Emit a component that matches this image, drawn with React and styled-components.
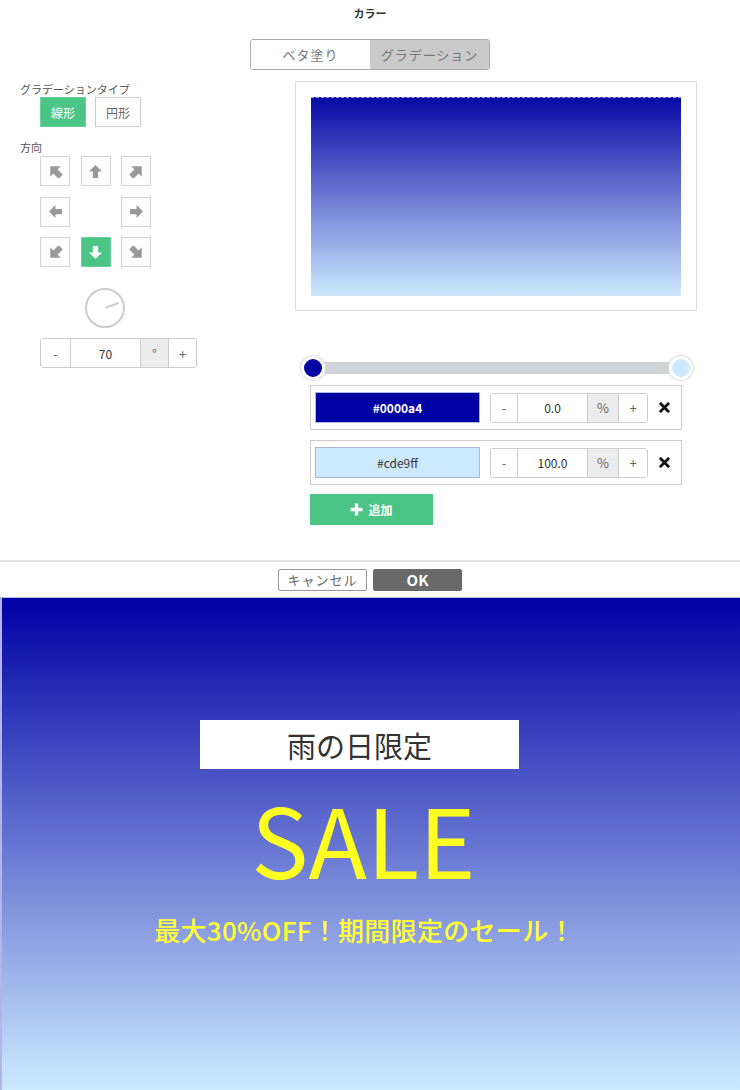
import React from 'react';
import styled, { createGlobalStyle } from 'styled-components';

const GlobalStyle = createGlobalStyle`
  html, body {
    margin: 0;
    padding: 0;
    background: #fff;
  }
  body {
    font-family: "Noto Sans CJK JP", "Noto Sans", sans-serif;
    color: #333;
  }
`;

const GREEN = '#4bc586';

const Page = styled.div`
  width: 740px;
  height: 1090px;
  overflow: hidden;
  display: flex;
  flex-direction: column;
`;

const Title = styled.div`
  height: 26px;
  line-height: 26px;
  text-align: center;
  font-size: 11px;
  font-weight: bold;
  color: #333;
`;

const Tabs = styled.div`
  align-self: center;
  margin-top: 13px;
  display: flex;
  width: 240px;
  height: 31px;
  border: 1px solid #aaa;
  border-radius: 3px;
  overflow: hidden;
  box-sizing: border-box;
`;

const Tab = styled.div`
  flex: 1;
  display: flex;
  align-items: center;
  justify-content: center;
  font-size: 13px;
  letter-spacing: 1px;
  color: #777;
  background: ${p => (p.$active ? '#c9c9c9' : '#fff')};
`;

const Body = styled.div`
  margin-top: 11px;
  height: 444px;
  display: flex;
`;

const LeftCol = styled.div`
  width: 295px;
  padding-left: 20px;
  box-sizing: border-box;
  display: flex;
  flex-direction: column;
  align-items: flex-start;
`;

const Label = styled.div`
  font-size: 11px;
  line-height: 16px;
  color: #555;
  margin-top: ${p => p.$top || 0}px;
`;

const TypeRow = styled.div`
  display: flex;
  gap: 9px;
  margin-left: 20px;
`;

const TypeButton = styled.div`
  width: 46px;
  height: 30px;
  box-sizing: border-box;
  display: flex;
  align-items: center;
  justify-content: center;
  font-size: 12px;
  color: ${p => (p.$active ? '#fff' : '#666')};
  background: ${p => (p.$active ? GREEN : '#fff')};
  border: 1px solid ${p => (p.$active ? '#69d09b' : '#ccc')};
`;

const DirGrid = styled.div`
  margin: 1px 0 0 20px;
  display: grid;
  grid-template-columns: repeat(3, 30px);
  grid-auto-rows: 30px;
  column-gap: 10.5px;
  row-gap: 10.5px;
`;

const DirButton = styled.div`
  box-sizing: border-box;
  display: flex;
  align-items: center;
  justify-content: center;
  background: ${p => (p.$active ? GREEN : '#fff')};
  border: 1px solid ${p => (p.$active ? '#69d09b' : '#d4d4d4')};
  color: ${p => (p.$active ? '#fff' : '#999')};
`;

const Empty = styled.div``;

const DialWrap = styled.div`
  margin: 21px 0 0 65px;
  width: 40px;
  height: 40px;
`;

const Stepper = styled.div`
  margin: ${p => p.$margin || '0'};
  display: flex;
  height: 30px;
  border: 1px solid #ccc;
  border-radius: 3px;
  box-sizing: border-box;
  overflow: hidden;
  background: #fff;
`;

const StepCell = styled.div`
  width: ${p => p.$w}px;
  box-sizing: border-box;
  display: flex;
  align-items: center;
  justify-content: center;
  font-size: ${p => (p.$value ? 12 : 13)}px;
  color: ${p => (p.$value ? '#333' : '#666')};
  background: ${p => (p.$unit ? '#ececec' : '#fff')};
  border-left: ${p => (p.$first ? 'none' : '1px solid #ccc')};
`;

const RightCol = styled.div`
  width: 402px;
  display: flex;
  flex-direction: column;
`;

const PreviewBox = styled.div`
  width: 402px;
  height: 232px;
  box-sizing: border-box;
  border: 1px solid #ddd;
  padding: 15px 15px 14px;
`;

const PreviewFill = styled.div`
  height: 100%;
  box-sizing: border-box;
  border-top: 1px dashed #a4a4dc;
  border-bottom: 1px dashed #d6e2f2;
  background: linear-gradient(180deg, #0808a6 0%, #cde9ff 100%);
  background-origin: border-box;
`;

const Slider = styled.div`
  position: relative;
  margin: 45px 0 0 18px;
  width: 368px;
  height: 24px;
  display: flex;
  align-items: center;
`;

const Track = styled.div`
  width: 100%;
  height: 12px;
  background: #d1d4d7;
`;

const Knob = styled.div`
  position: absolute;
  top: 0;
  left: ${p => p.$at}%;
  width: 24px;
  height: 24px;
  margin-left: -12px;
  box-sizing: border-box;
  border-radius: 50%;
  border: 3px solid #fff;
  box-shadow: 0 0 0 1px #ddd;
  background: ${p => p.$color};
`;

const StopList = styled.div`
  margin: 6px 0 0 15px;
  width: 372px;
  display: flex;
  flex-direction: column;
  gap: 10px;
`;

const StopRow = styled.div`
  height: 45px;
  box-sizing: border-box;
  border: 1px solid #ccc;
  padding-left: 4px;
  display: flex;
  align-items: center;
`;

const Swatch = styled.div`
  width: 165px;
  height: 31px;
  box-sizing: border-box;
  border: 1px solid #a9b7df;
  background: ${p => p.$color};
  color: ${p => (p.$dark ? '#fff' : '#333')};
  font-weight: ${p => (p.$dark ? 'bold' : 'normal')};
  font-size: 12px;
  display: flex;
  align-items: center;
  justify-content: center;
  margin-right: 10px;
`;

const Remove = styled.div`
  flex: 1;
  display: flex;
  align-items: center;
  justify-content: center;
`;

const AddButton = styled.div`
  margin: 9px 0 0 15px;
  width: 123px;
  height: 31px;
  background: ${GREEN};
  color: #fff;
  font-size: 12px;
  font-weight: bold;
  display: flex;
  align-items: center;
  justify-content: center;
  gap: 5px;
`;

const Divider = styled.div`
  height: 2px;
  background: #e4e4e4;
  margin-top: 35px;
`;

const Footer = styled.div`
  height: 35px;
  display: flex;
  align-items: center;
  justify-content: center;
  gap: 6px;
`;

const FootButton = styled.div`
  width: 89px;
  height: 22px;
  box-sizing: border-box;
  border-radius: 2px;
  display: flex;
  align-items: center;
  justify-content: center;
  border: 1px solid ${p => (p.$primary ? '#6a6a6a' : '#999')};
  background: ${p => (p.$primary ? '#6a6a6a' : '#fff')};
  color: ${p => (p.$primary ? '#fff' : '#666')};
  font-size: ${p => (p.$primary ? 15 : 13)}px;
  font-weight: ${p => (p.$primary ? 'bold' : 'normal')};
  letter-spacing: ${p => (p.$primary ? 0 : 1)}px;
`;

const Banner = styled.div`
  flex: 1;
  box-sizing: border-box;
  border-top: 1px solid #b9b9e6;
  border-left: 2px solid #b4b4ea;
  padding-right: 13px;
  background: linear-gradient(180deg, #0000a4 0%, #cde9ff 100%);
  display: flex;
  flex-direction: column;
  align-items: center;
`;

const Tag = styled.div`
  margin: 122px 10px 0 0;
  width: 319px;
  height: 49px;
  background: #fff;
  display: flex;
  align-items: center;
  justify-content: center;
  font-size: 29px;
  color: #333;
`;

const Sale = styled.div`
  margin: 14px 2px 0 0;
  font-size: 96px;
  line-height: 110px;
  color: #ffff22;
`;

const Offer = styled.div`
  margin-top: 18px;
  font-size: 26px;
  font-weight: 500;
  color: #ffff33;
  letter-spacing: 0.3px;
`;

const Arrow = ({ deg }) => {
  const size = deg % 90 === 0 ? 15 : 17;
  return (
    <svg width={size} height={size} viewBox="0 0 16 16" style={{ transform: `rotate(${deg}deg)` }}>
      <path d="M8 1 L15 8 H10.8 V15 H5.2 V8 H1 Z" fill="currentColor" />
    </svg>
  );
};

const Dial = ({ angle }) => {
  const r = (angle - 90) * Math.PI / 180;
  const x = 20 + Math.cos(r) * 14.5;
  const y = 20 + Math.sin(r) * 14.5;
  return (
    <svg width="40" height="40" viewBox="0 0 40 40">
      <circle cx="20" cy="20" r="19" fill="#fff" stroke="#ccc" strokeWidth="2" />
      <line x1="20.5" y1="19.8" x2={x} y2={y} stroke="#ccc" strokeWidth="2" />
    </svg>
  );
};

const Cross = () => (
  <svg width="11" height="11" viewBox="0 0 12 12">
    <path d="M2 2 L10 10 M10 2 L2 10" stroke="#111" strokeWidth="3" strokeLinecap="square" />
  </svg>
);

const Plus = () => (
  <svg width="13" height="13" viewBox="0 0 13 13">
    <path d="M6.5 0.5 V12.5 M0.5 6.5 H12.5" stroke="#fff" strokeWidth="3.4" />
  </svg>
);

const directions = [-45, 0, 45, -90, null, 90, -135, 180, 135];

const stops = [
  { color: '#0000a4', dark: true, pos: '0.0', at: 0 },
  { color: '#cde9ff', dark: false, pos: '100.0', at: 100 },
];

const NumberStepper = ({ value, unit, widths, margin }) => (
  <Stepper $margin={margin}>
    <StepCell $w={widths[0]} $first>-</StepCell>
    <StepCell $w={widths[1]} $value>{value}</StepCell>
    <StepCell $w={widths[2]} $unit>{unit}</StepCell>
    <StepCell $w={widths[3]}>+</StepCell>
  </Stepper>
);

export default function App() {
  return (
    <>
      <GlobalStyle />
      <Page>
        <Title>カラー</Title>
        <Tabs>
          <Tab>ベタ塗り</Tab>
          <Tab $active>グラデーション</Tab>
        </Tabs>

        <Body>
          <LeftCol>
            <Label>グラデーションタイプ</Label>
            <TypeRow>
              <TypeButton $active>線形</TypeButton>
              <TypeButton>円形</TypeButton>
            </TypeRow>
            <Label $top={12}>方向</Label>
            <DirGrid>
              {directions.map((d, i) =>
                d === null ? (
                  <Empty key={i} />
                ) : (
                  <DirButton key={i} $active={d === 180}>
                    <Arrow deg={d} />
                  </DirButton>
                )
              )}
            </DirGrid>
            <DialWrap>
              <Dial angle={70} />
            </DialWrap>
            <NumberStepper value="70" unit="°" widths={[29, 70, 28, 28]} margin="10px 0 0 20px" />
          </LeftCol>

          <RightCol>
            <PreviewBox>
              <PreviewFill />
            </PreviewBox>
            <Slider>
              <Track />
              {stops.map(s => (
                <Knob key={s.color} $at={s.at} $color={s.color} />
              ))}
            </Slider>
            <StopList>
              {stops.map(s => (
                <StopRow key={s.color}>
                  <Swatch $color={s.color} $dark={s.dark}>{s.color}</Swatch>
                  <NumberStepper value={s.pos} unit="%" widths={[26, 70, 31, 29]} />
                  <Remove>
                    <Cross />
                  </Remove>
                </StopRow>
              ))}
            </StopList>
            <AddButton>
              <Plus />
              追加
            </AddButton>
          </RightCol>
        </Body>

        <Divider />
        <Footer>
          <FootButton>キャンセル</FootButton>
          <FootButton $primary>OK</FootButton>
        </Footer>

        <Banner>
          <Tag>雨の日限定</Tag>
          <Sale>SALE</Sale>
          <Offer>最大30%OFF！期間限定のセール！</Offer>
        </Banner>
      </Page>
    </>
  );
}
